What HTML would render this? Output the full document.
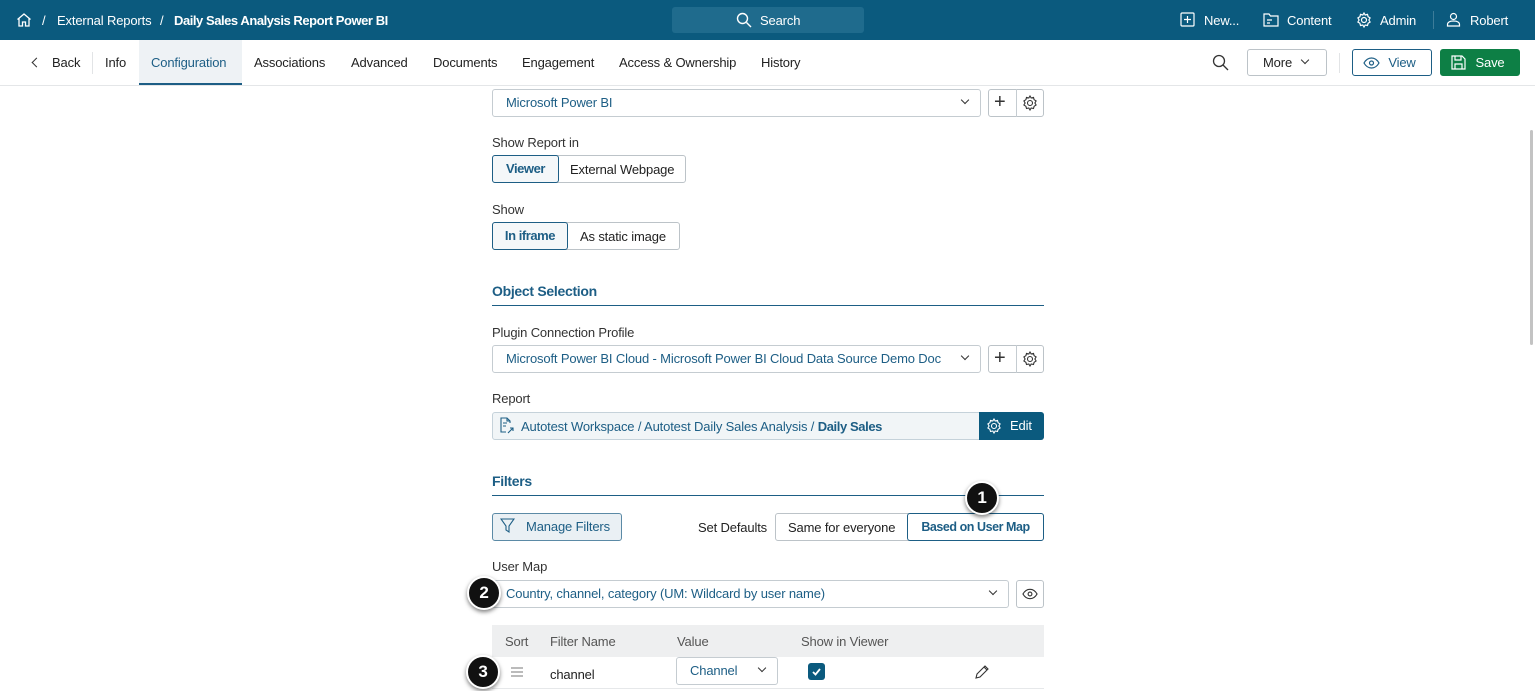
<!DOCTYPE html>
<html><head><meta charset="utf-8"><style>
*{box-sizing:border-box;margin:0;padding:0}
body{width:1535px;height:691px;overflow:hidden;background:#fff;font-family:"Liberation Sans",Arial,sans-serif;font-size:13px;color:#222;position:relative;letter-spacing:-0.15px}
b{letter-spacing:-0.4px}
.a{position:absolute}
.top{left:0;top:0;width:1535px;height:40px;background:#0b5a7e;color:#fff}
.top span{position:absolute;top:13px;font-size:13px}
.tabs{left:0;top:40px;width:1535px;height:46px;border-bottom:1px solid #e4e6e8}
.tab{position:absolute;top:15px;font-size:13px;color:#222}
.btn{position:absolute;border:1px solid #bcc3c8;border-radius:3px;background:#fff;font-size:13px;color:#222;text-align:center}
.sel{position:absolute;border:1px solid #c5ccd1;border-radius:3px;background:#fff;color:#1d5e85;font-size:13px;padding-left:13px;line-height:26px}
.lbl{position:absolute;font-size:13px;color:#333}
.h{position:absolute;font-size:14px;font-weight:bold;color:#1d5e85;letter-spacing:-0.3px}
.line{position:absolute;height:1px;background:#1d5e85}
.chev{position:absolute;width:7px;height:7px;border-right:1.4px solid #333;border-bottom:1.4px solid #333;transform:rotate(45deg)}
.badge{position:absolute;width:34px;height:34px;border-radius:50%;background:#111;color:#fff;border:2px solid #fff;box-shadow:0 2px 4px rgba(0,0,0,.5);font-size:17px;font-weight:bold;text-align:center;line-height:30px}
.bd{font-weight:bold;letter-spacing:-0.45px}
</style></head><body>
<div class="a top">
 <svg class="a" style="left:16px;top:12px" width="16" height="16" viewBox="0 0 16 16" fill="none" stroke="#fff" stroke-width="1.3"><path d="M1.5 7.5L8 2l6.5 5.5M3 6.5V14h3.5v-4h3v4H13V6.5"/></svg>
 <span style="left:42px">/</span><span style="left:57px">External Reports</span><span style="left:160px">/</span>
 <span class="bd" style="left:174px">Daily Sales Analysis Report Power BI</span>
 <div class="a" style="left:672px;top:7px;width:192px;height:26px;background:#1f6b8d;border-radius:3px"></div>
 <svg class="a" style="left:736px;top:12px" width="16" height="16" viewBox="0 0 16 16" fill="none" stroke="#fff" stroke-width="1.4"><circle cx="6.5" cy="6.5" r="5"/><path d="M10.5 10.5L15 15"/></svg>
 <span style="left:760px">Search</span>
 <svg class="a" style="left:1180px;top:12px" width="15" height="15" viewBox="0 0 15 15" fill="none" stroke="#fff" stroke-width="1.2"><rect x="1" y="1" width="13" height="13" rx="1"/><path d="M7.5 4v7M4 7.5h7"/></svg>
 <span style="left:1204px">New...</span>
 <svg class="a" style="left:1263px;top:12px" width="16" height="15" viewBox="0 0 16 15" fill="none" stroke="#fff" stroke-width="1.2"><path d="M1 2h5l1.5 2H15v10H1z"/><path d="M4 8h5M4 11h3"/></svg>
 <span style="left:1287px">Content</span>
 <svg class="a" style="left:1356px;top:12px" width="16" height="16" viewBox="0 0 16 16" fill="none" stroke="#fff" stroke-width="1.2"><circle cx="8" cy="8" r="2.5"/><path d="M8 1l1.2 2 2.3-.6.6 2.3 2 1.2-1.2 2.1 1.2 2-2 1.3-.6 2.2-2.3-.5L8 15l-1.2-2-2.3.5-.6-2.2-2-1.3 1.2-2-1.2-2.1 2-1.2.6-2.3 2.3.6z"/></svg>
 <span style="left:1380px">Admin</span>
 <div class="a" style="left:1433px;top:11px;width:1px;height:18px;background:#3d7c99"></div>
 <svg class="a" style="left:1446px;top:12px" width="15" height="15" viewBox="0 0 15 15" fill="none" stroke="#fff" stroke-width="1.2"><circle cx="7.5" cy="4.5" r="3"/><path d="M1.5 14v-1.5c0-2 2-3.5 6-3.5s6 1.5 6 3.5V14z"/></svg>
 <span style="left:1470px">Robert</span>
</div>
<div class="a tabs">
 <div class="chev" style="left:33px;top:19px;transform:rotate(135deg)"></div>
 <span class="tab" style="left:52px">Back</span>
 <div class="a" style="left:92px;top:12px;width:1px;height:22px;background:#e2e4e6"></div>
 <span class="tab" style="left:105px">Info</span>
 <div class="a" style="left:139px;top:0;width:103px;height:45px;background:#eef2f5;border-bottom:2px solid #1d5e85"></div>
 <span class="tab" style="left:151px;color:#1d5e85">Configuration</span>
 <span class="tab" style="left:254px">Associations</span>
 <span class="tab" style="left:351px">Advanced</span>
 <span class="tab" style="left:433px">Documents</span>
 <span class="tab" style="left:522px">Engagement</span>
 <span class="tab" style="left:619px">Access &amp; Ownership</span>
 <span class="tab" style="left:761px">History</span>
 <svg class="a" style="left:1212px;top:14px" width="17" height="17" viewBox="0 0 17 17" fill="none" stroke="#333" stroke-width="1.3"><circle cx="7" cy="7" r="5.5"/><path d="M11 11l5 5"/></svg>
 <div class="btn" style="left:1247px;top:9px;width:80px;height:27px;line-height:25px;text-align:left;padding-left:15px">More</div>
 <div class="chev" style="left:1302px;top:17px;width:6px;height:6px"></div>
 <div class="a" style="left:1339px;top:13px;width:1px;height:20px;background:#e2e4e6"></div>
 <div class="btn" style="left:1352px;top:9px;width:80px;height:27px;line-height:25px;border-color:#1d5e85;color:#1d5e85;padding-left:20px">View</div>
 <svg class="a" style="left:1363px;top:17px" width="17" height="12" viewBox="0 0 17 12" fill="none" stroke="#1d5e85" stroke-width="1.2"><path d="M1 6c2-3.5 4.5-5 7.5-5s5.5 1.5 7.5 5c-2 3.5-4.5 5-7.5 5S3 9.5 1 6z"/><circle cx="8.5" cy="6" r="2"/></svg>
 <div class="btn" style="left:1440px;top:9px;width:80px;height:27px;line-height:25px;background:#0d7f45;border-color:#0d7f45;color:#fff;padding-left:20px">Save</div>
 <svg class="a" style="left:1451px;top:15px" width="15" height="15" viewBox="0 0 15 15" fill="none" stroke="#fff" stroke-width="1.2"><path d="M1 1h10l3 3v10H1z"/><path d="M4 1v4h6V1M4 14V9h7v5"/></svg>
</div>
<div class="a" style="left:1530px;top:130px;width:3px;height:215px;background:#c3c3c3;border-radius:2px"></div>

<div class="sel" style="left:492px;top:89px;width:489px;height:28px">Microsoft Power BI</div>
<div class="chev" style="left:962px;top:97px;width:6px;height:6px"></div>
<div class="btn" style="left:988px;top:89px;width:56px;height:28px"></div>
<div class="a" style="left:1016px;top:89px;width:1px;height:28px;background:#c5ccd1"></div>
<span class="a" style="left:994px;top:89px;font-size:20px;line-height:26px;color:#333">+</span>
<svg class="a" style="left:1022px;top:95px" width="16" height="16" viewBox="0 0 16 16" fill="none" stroke="#333" stroke-width="1.1"><circle cx="8" cy="8" r="2.5"/><path d="M8 1l1.2 2 2.3-.6.6 2.3 2 1.2-1.2 2.1 1.2 2-2 1.3-.6 2.2-2.3-.5L8 15l-1.2-2-2.3.5-.6-2.2-2-1.3 1.2-2-1.2-2.1 2-1.2.6-2.3 2.3.6z"/></svg>

<div class="lbl" style="left:492px;top:135px">Show Report in</div>
<div class="btn" style="left:492px;top:155px;width:194px;height:28px"></div>
<div class="btn bd" style="left:492px;top:155px;width:67px;height:28px;line-height:26px;border-color:#1d5e85;color:#1d5e85;background:#f4f7f9">Viewer</div>
<span class="a" style="left:570px;top:162px">External Webpage</span>
<div class="lbl" style="left:492px;top:202px">Show</div>
<div class="btn" style="left:492px;top:222px;width:188px;height:28px"></div>
<div class="btn bd" style="left:492px;top:222px;width:76px;height:28px;line-height:26px;border-color:#1d5e85;color:#1d5e85;background:#f4f7f9">In iframe</div>
<span class="a" style="left:580px;top:229px">As static image</span>

<div class="h" style="left:492px;top:283px">Object Selection</div>
<div class="line" style="left:492px;top:305px;width:552px"></div>
<div class="lbl" style="left:492px;top:325px">Plugin Connection Profile</div>
<div class="sel" style="left:492px;top:345px;width:489px;height:28px">Microsoft Power BI Cloud - Microsoft Power BI Cloud Data Source Demo Doc</div>
<div class="chev" style="left:962px;top:353px;width:6px;height:6px"></div>
<div class="btn" style="left:988px;top:345px;width:56px;height:28px"></div>
<div class="a" style="left:1016px;top:345px;width:1px;height:28px;background:#c5ccd1"></div>
<span class="a" style="left:994px;top:345px;font-size:20px;line-height:26px;color:#333">+</span>
<svg class="a" style="left:1022px;top:351px" width="16" height="16" viewBox="0 0 16 16" fill="none" stroke="#333" stroke-width="1.1"><circle cx="8" cy="8" r="2.5"/><path d="M8 1l1.2 2 2.3-.6.6 2.3 2 1.2-1.2 2.1 1.2 2-2 1.3-.6 2.2-2.3-.5L8 15l-1.2-2-2.3.5-.6-2.2-2-1.3 1.2-2-1.2-2.1 2-1.2.6-2.3 2.3.6z"/></svg>

<div class="lbl" style="left:492px;top:391px">Report</div>
<div class="a" style="left:492px;top:412px;width:552px;height:28px;border:1px solid #c5d2da;border-radius:3px;background:#f1f5f7"></div>
<svg class="a" style="left:500px;top:417px" width="15" height="17" viewBox="0 0 15 17" fill="none" stroke="#1d5e85" stroke-width="1.1"><path d="M10 6V4L7 1H1v14h5M7 1v3h3M3 6h4M3 9h3"/><path d="M8 16l5-5M10 11h3v3"/></svg>
<span class="a" style="left:521px;top:419px;color:#1d5e85">Autotest Workspace / Autotest Daily Sales Analysis / <b>Daily Sales</b></span>
<div class="a" style="left:979px;top:412px;width:65px;height:28px;background:#0b5a7e;border-radius:0 3px 3px 0;color:#fff;line-height:28px;padding-left:31px">Edit</div>
<svg class="a" style="left:986px;top:418px" width="16" height="16" viewBox="0 0 16 16" fill="none" stroke="#fff" stroke-width="1.1"><circle cx="8" cy="8" r="2.5"/><path d="M8 1l1.2 2 2.3-.6.6 2.3 2 1.2-1.2 2.1 1.2 2-2 1.3-.6 2.2-2.3-.5L8 15l-1.2-2-2.3.5-.6-2.2-2-1.3 1.2-2-1.2-2.1 2-1.2.6-2.3 2.3.6z"/></svg>

<div class="h" style="left:492px;top:473px">Filters</div>
<div class="line" style="left:492px;top:495px;width:552px"></div>
<div class="btn" style="left:492px;top:513px;width:130px;height:28px;line-height:26px;background:#eaf0f4;border-color:#5b8aa6;color:#1d5e85;padding-left:22px">Manage Filters</div>
<svg class="a" style="left:500px;top:518px" width="15" height="16" viewBox="0 0 15 16" fill="none" stroke="#1d5e85" stroke-width="1.1"><path d="M1 1h13L9 8v6l-3-2V8z"/></svg>
<span class="a" style="left:698px;top:520px">Set Defaults</span>
<div class="btn" style="left:775px;top:513px;width:269px;height:28px"></div>
<span class="a" style="left:788px;top:520px">Same for everyone</span>
<div class="btn bd" style="left:907px;top:513px;width:137px;height:28px;line-height:26px;border-color:#1d5e85;color:#1d5e85;font-size:12.5px">Based on User Map</div>
<div class="badge" style="left:965px;top:481px">1</div>

<div class="lbl" style="left:492px;top:559px">User Map</div>
<div class="sel" style="left:492px;top:580px;width:517px;height:28px">Country, channel, category (UM: Wildcard by user name)</div>
<div class="chev" style="left:990px;top:588px;width:6px;height:6px"></div>
<div class="btn" style="left:1016px;top:580px;width:28px;height:28px"></div>
<svg class="a" style="left:1022px;top:588px" width="16" height="12" viewBox="0 0 17 12" fill="none" stroke="#333" stroke-width="1.2"><path d="M1 6c2-3.5 4.5-5 7.5-5s5.5 1.5 7.5 5c-2 3.5-4.5 5-7.5 5S3 9.5 1 6z"/><circle cx="8.5" cy="6" r="2"/></svg>
<div class="badge" style="left:467px;top:576px">2</div>

<div class="a" style="left:492px;top:625px;width:552px;height:32px;background:#eeeff0"></div>
<span class="a" style="left:505px;top:634px;color:#555">Sort</span>
<span class="a" style="left:550px;top:634px;color:#555">Filter Name</span>
<span class="a" style="left:677px;top:634px;color:#555">Value</span>
<span class="a" style="left:801px;top:634px;color:#555">Show in Viewer</span>
<div class="a" style="left:492px;top:688px;width:552px;height:1px;background:#e6e8ea"></div>
<svg class="a" style="left:511px;top:667px" width="12" height="10" viewBox="0 0 12 10" stroke="#777" stroke-width="1"><path d="M0 1h12M0 5h12M0 9h12"/></svg>
<span class="a" style="left:550px;top:667px">channel</span>
<div class="sel" style="left:676px;top:657px;width:102px;height:28px">Channel</div>
<div class="chev" style="left:759px;top:665px;width:6px;height:6px"></div>
<div class="a" style="left:808px;top:663px;width:17px;height:17px;background:#0b5a7e;border-radius:3px"></div>
<svg class="a" style="left:810px;top:665px" width="13" height="13" viewBox="0 0 13 13" fill="none" stroke="#fff" stroke-width="1.8"><path d="M3 7l2.5 2.5L10 4"/></svg>
<svg class="a" style="left:974px;top:664px" width="16" height="16" viewBox="0 0 16 16" fill="none" stroke="#333" stroke-width="1.1"><path d="M2 14l1-4 8-8 3 3-8 8zM10 3l3 3"/></svg>
<div class="badge" style="left:466px;top:655px">3</div>
</body></html>
